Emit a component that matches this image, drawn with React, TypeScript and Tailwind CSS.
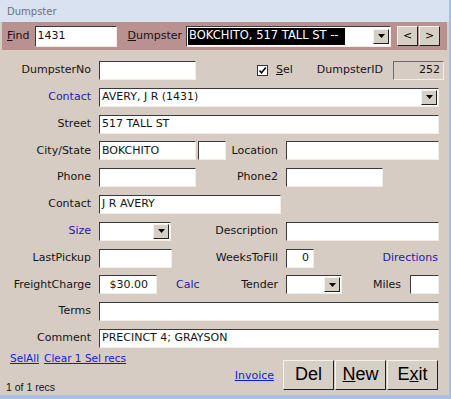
import React from "react";

const sunk =
  "h-[19px] bg-white border border-t-[#3a3a3a] border-l-[#3a3a3a] border-r-[#f2eee6] border-b-[#f2eee6] px-[2px] flex items-center text-[#141414] overflow-hidden whitespace-nowrap";

const raised =
  "bg-[#d6cfc6] border border-t-[#f6f2ea] border-l-[#f6f2ea] border-r-[#202020] border-b-[#202020] flex items-center justify-center";

function DropBtn() {
  return (
    <div className={raised + " w-[16px] h-[15px] ml-auto shrink-0"}>
      <svg width="7" height="4" viewBox="0 0 7 4">
        <path d="M0 0h7L3.5 4z" fill="#000" />
      </svg>
    </div>
  );
}

function Combo({ w, text }: { w: string; text?: string }) {
  return (
    <div className={sunk + " " + w + " pr-[1px]"}>
      <span>{text}</span>
      <DropBtn />
    </div>
  );
}

function Label({ children, blue }: { children: React.ReactNode; blue?: boolean }) {
  return (
    <div
      className={
        "w-[91px] mr-[8px] text-right shrink-0 " +
        (blue ? "text-[#1c1ca8]" : "text-[#141414]")
      }
    >
      {children}
    </div>
  );
}

export default function App() {
  return (
    <div className="w-[451px] h-[399px] bg-[#d6ccc4] flex flex-col font-['DejaVu_Sans',sans-serif] text-[11px] overflow-hidden border-r-[2px] border-r-[#a9bfdf]">
      {/* title */}
      <div className="h-[22px] bg-[#d9e2f1] flex items-center pl-[7px] text-[10px] text-[#6b727c] shrink-0">
        Dumpster
      </div>

      {/* find band */}
      <div className="h-[28px] mx-[2px] bg-[#b99191] flex items-center shrink-0">
        <span className="ml-[5px] text-[#141414]">
          <span className="underline">F</span>ind
        </span>
        <div className={sunk + " ml-[5px] w-[82px] h-[21px]"}>1431</div>
        <span className="ml-[11px] text-[#141414]">
          <span className="underline">D</span>umpster
        </span>
        <div className={sunk + " ml-[4px] w-[205px] h-[21px] pl-[1px] pr-[1px]"}>
          <span className="bg-black text-white pl-[1px] pr-[6px] h-[17px] flex items-center text-[11.5px]">
            BOKCHITO, 517 TALL ST --
          </span>
          <DropBtn />
        </div>
        <div className={raised + " ml-[6px] w-[21px] h-[20px] text-[11px]"}>&lt;</div>
        <div className={raised + " ml-[1px] w-[21px] h-[20px] text-[11px]"}>&gt;</div>
      </div>

      {/* body */}
      <div className="flex flex-col gap-[7.8px] pt-[11px]">
        <div className="flex items-center h-[19px]">
          <Label>DumpsterNo</Label>
          <div className={sunk + " w-[97px]"}></div>
          <div className="ml-[61px] w-[11px] h-[11px] bg-white border border-[#333] flex items-center justify-center">
            <svg width="9" height="9" viewBox="0 0 9 9">
              <path d="M1.5 4.5l2 2.2L7.8 1.6" stroke="#000" strokeWidth="1.6" fill="none" />
            </svg>
          </div>
          <span className="ml-[8px] text-[#141414]">
            <span className="underline">S</span>el
          </span>
          <span className="ml-[24px] text-[#141414]">DumpsterID</span>
          <div className="ml-[10px] w-[51px] h-[19px] border border-t-[#6a6a6a] border-l-[#6a6a6a] border-r-[#f2eee6] border-b-[#f2eee6] flex items-center justify-end pr-[3px] text-[#141414]">
            252
          </div>
        </div>

        <div className="flex items-center h-[19px]">
          <Label blue>Contact</Label>
          <Combo w="w-[340px]" text="AVERY, J R (1431)" />
        </div>

        <div className="flex items-center h-[19px]">
          <Label>Street</Label>
          <div className={sunk + " w-[340px]"}>517 TALL ST</div>
        </div>

        <div className="flex items-center h-[19px]">
          <Label>City/State</Label>
          <div className="w-[179px] flex items-center">
            <div className={sunk + " w-[97px]"}>BOKCHITO</div>
            <div className={sunk + " w-[28px] ml-[2px]"}></div>
            <span className="flex-1 text-right text-[#141414]">Location</span>
          </div>
          <div className={sunk + " ml-[8px] w-[153px]"}></div>
        </div>

        <div className="flex items-center h-[19px]">
          <Label>Phone</Label>
          <div className="w-[179px] flex items-center">
            <div className={sunk + " w-[97px]"}></div>
            <span className="flex-1 text-right text-[#141414]">Phone2</span>
          </div>
          <div className={sunk + " ml-[8px] w-[97px]"}></div>
        </div>

        <div className="flex items-center h-[19px]">
          <Label>Contact</Label>
          <div className={sunk + " w-[182px]"}>J R AVERY</div>
        </div>

        <div className="flex items-center h-[19px]">
          <Label blue>Size</Label>
          <div className="w-[179px] flex items-center">
            <Combo w="w-[72px]" />
            <span className="flex-1 text-right text-[#141414]">Description</span>
          </div>
          <div className={sunk + " ml-[8px] w-[153px]"}></div>
        </div>

        <div className="flex items-center h-[19px]">
          <Label>LastPickup</Label>
          <div className="w-[179px] flex items-center">
            <div className={sunk + " w-[73px]"}></div>
            <span className="flex-1 text-right text-[#141414]">WeeksToFill</span>
          </div>
          <div className={sunk + " ml-[8px] w-[28px] justify-end pr-[4px]"}>0</div>
          <span className="ml-auto mr-[11px] text-[#1c1ca8]">Directions</span>
        </div>

        <div className="flex items-center h-[19px]">
          <Label>FreightCharge</Label>
          <div className="w-[179px] flex items-center">
            <div className={sunk + " w-[58px] justify-end pr-[8px]"}>$30.00</div>
            <span className="ml-[19px] text-[#1c1ca8]">Calc</span>
            <span className="flex-1 text-right text-[#141414]">Tender</span>
          </div>
          <div className="ml-[8px]">
            <Combo w="w-[56px]" />
          </div>
          <span className="ml-[31px] text-[#141414]">Miles</span>
          <div className={sunk + " ml-[9px] w-[29px]"}></div>
        </div>

        <div className="flex items-center h-[19px]">
          <Label>Terms</Label>
          <div className={sunk + " w-[340px]"}></div>
        </div>

        <div className="flex items-center h-[19px]">
          <Label>Comment</Label>
          <div className={sunk + " w-[340px]"}>PRECINCT 4; GRAYSON</div>
        </div>
      </div>

      {/* footer */}
      <div className="flex flex-1">
        <div className="flex flex-col pl-[6px]">
          <div className="mt-[3px] ml-[4px] text-[10.5px] text-[#0a1ee0] flex gap-[5px]">
            <span className="underline">SelAll</span>
            <span className="underline">Clear 1 Sel recs</span>
          </div>
          <div className="mt-[13px] font-['Liberation_Sans',sans-serif] text-[10.5px] text-[#141414]">
            1 of 1 recs
          </div>
        </div>
        <div className="ml-auto mr-[11px] mt-[12px] flex items-start">
          <span className="mt-[8px] mr-[9px] text-[#0a1ee0] underline">Invoice</span>
          <div className={raised + " w-[51px] h-[30px] text-[18px] font-['Liberation_Sans',sans-serif] text-black"}>Del</div>
          <div className={raised + " ml-[1px] w-[51px] h-[30px] text-[18px] font-['Liberation_Sans',sans-serif] text-black"}>
            <span className="underline">N</span>ew
          </div>
          <div className={raised + " ml-[1px] w-[51px] h-[30px] text-[18px] font-['Liberation_Sans',sans-serif] text-black"}>
            E<span className="underline">x</span>it
          </div>
        </div>
      </div>
      <div className="h-[6px] bg-[#a9bfdf] shrink-0"></div>
    </div>
  );
}
